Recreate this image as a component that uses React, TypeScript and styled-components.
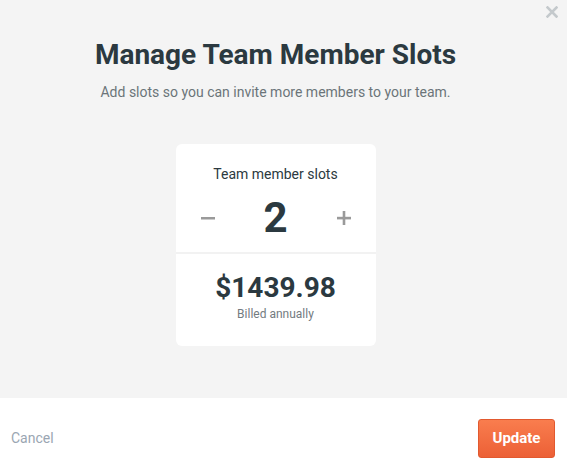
import * as React from "react";
import styled, { createGlobalStyle } from "styled-components";

const GlobalStyle = createGlobalStyle`
  html, body {
    margin: 0;
    padding: 0;
    background: #ffffff;
    font-family: Roboto, "Liberation Sans", sans-serif;
  }
`;

const Modal = styled.div`
  width: 567px;
  height: 470px;
  display: flex;
  flex-direction: column;
  overflow: hidden;
`;

const ModalBody = styled.div`
  position: relative;
  flex-shrink: 0;
  height: 398px;
  box-sizing: border-box;
  padding: 38px 16px 0 0;
  background: #f4f4f4;
  display: flex;
  flex-direction: column;
  align-items: center;
`;

const CloseButton = styled.button`
  position: absolute;
  top: 6px;
  right: 9px;
  width: 12px;
  height: 12px;
  padding: 0;
  border: none;
  background: none;
  cursor: pointer;
  display: flex;
`;

const Title = styled.h1`
  margin: 0;
  font-size: 28px;
  line-height: 34px;
  font-weight: 700;
  color: #2b3940;
`;

const Subtitle = styled.p`
  margin: 10px 0 0;
  font-size: 14px;
  line-height: 20px;
  color: #6b7479;
`;

const Card = styled.div`
  margin-top: 42px;
  width: 200px;
  background: #ffffff;
  border-radius: 6px;
  display: flex;
  flex-direction: column;
`;

const SlotsSection = styled.div`
  padding: 20px 0 10px;
  display: flex;
  flex-direction: column;
  align-items: center;
  border-bottom: 2px solid #f2f2f2;
`;

const SlotsLabel = styled.div`
  font-size: 14px;
  line-height: 20px;
  color: #2b3940;
`;

const Stepper = styled.div`
  width: 100%;
  margin-top: 10px;
  display: grid;
  grid-template-columns: 1fr auto 1fr;
  align-items: center;
`;

const StepButton = styled.button<{ $side: "left" | "right" }>`
  justify-self: ${(p) => (p.$side === "left" ? "start" : "end")};
  margin: 0 25px;
  padding: 0;
  border: none;
  background: none;
  cursor: pointer;
  display: flex;
`;

const Count = styled.div`
  font-size: 42px;
  line-height: 48px;
  font-weight: 700;
  color: #2b3940;
`;

const PriceSection = styled.div`
  padding: 16px 0 24px;
  display: flex;
  flex-direction: column;
  align-items: center;
`;

const Price = styled.div`
  font-size: 28px;
  line-height: 36px;
  font-weight: 700;
  color: #2b3940;
`;

const Billing = styled.div`
  font-size: 12px;
  line-height: 16px;
  color: #737b80;
`;

const Footer = styled.div`
  flex-shrink: 0;
  height: 80px;
  padding: 0 12px 0 11px;
  display: flex;
  align-items: center;
  justify-content: space-between;
  background: #ffffff;
`;

const CancelLink = styled.button`
  padding: 0;
  border: none;
  background: none;
  font-family: inherit;
  font-size: 14px;
  color: #9aa6b2;
  cursor: pointer;
`;

const UpdateButton = styled.button`
  width: 77px;
  height: 39px;
  border: 1px solid #e2592f;
  border-radius: 3px;
  background: linear-gradient(#f97d4e, #ec6036);
  color: #ffffff;
  font-family: inherit;
  font-size: 15px;
  font-weight: 700;
  cursor: pointer;
`;

const MinusIcon = () => (
  <svg width="14" height="14" viewBox="0 0 14 14">
    <rect x="0" y="6" width="14" height="2.5" fill="#9a9a9a" />
  </svg>
);

const PlusIcon = () => (
  <svg width="14" height="14" viewBox="0 0 14 14">
    <rect x="0" y="5.8" width="14" height="2.6" fill="#9a9a9a" />
    <rect x="5.7" y="0" width="2.6" height="14" fill="#9a9a9a" />
  </svg>
);

const CloseIcon = () => (
  <svg width="12" height="12" viewBox="0 0 12 12">
    <path
      d="M1.5 1.5 L10.5 10.5 M10.5 1.5 L1.5 10.5"
      stroke="#c4c9cc"
      strokeWidth="2.6"
      strokeLinecap="square"
    />
  </svg>
);

const PRICE_PER_SLOT = 719.99;

export default function App() {
  const [slots, setSlots] = React.useState(2);
  const price = (slots * PRICE_PER_SLOT).toFixed(2);

  return (
    <Modal>
      <GlobalStyle />
      <ModalBody>
        <CloseButton aria-label="Close">
          <CloseIcon />
        </CloseButton>
        <Title>Manage Team Member Slots</Title>
        <Subtitle>Add slots so you can invite more members to your team.</Subtitle>
        <Card>
          <SlotsSection>
            <SlotsLabel>Team member slots</SlotsLabel>
            <Stepper>
              <StepButton
                $side="left"
                aria-label="Remove slot"
                onClick={() => setSlots((s) => Math.max(1, s - 1))}
              >
                <MinusIcon />
              </StepButton>
              <Count>{slots}</Count>
              <StepButton
                $side="right"
                aria-label="Add slot"
                onClick={() => setSlots((s) => s + 1)}
              >
                <PlusIcon />
              </StepButton>
            </Stepper>
          </SlotsSection>
          <PriceSection>
            <Price>${price}</Price>
            <Billing>Billed annually</Billing>
          </PriceSection>
        </Card>
      </ModalBody>
      <Footer>
        <CancelLink>Cancel</CancelLink>
        <UpdateButton>Update</UpdateButton>
      </Footer>
    </Modal>
  );
}
